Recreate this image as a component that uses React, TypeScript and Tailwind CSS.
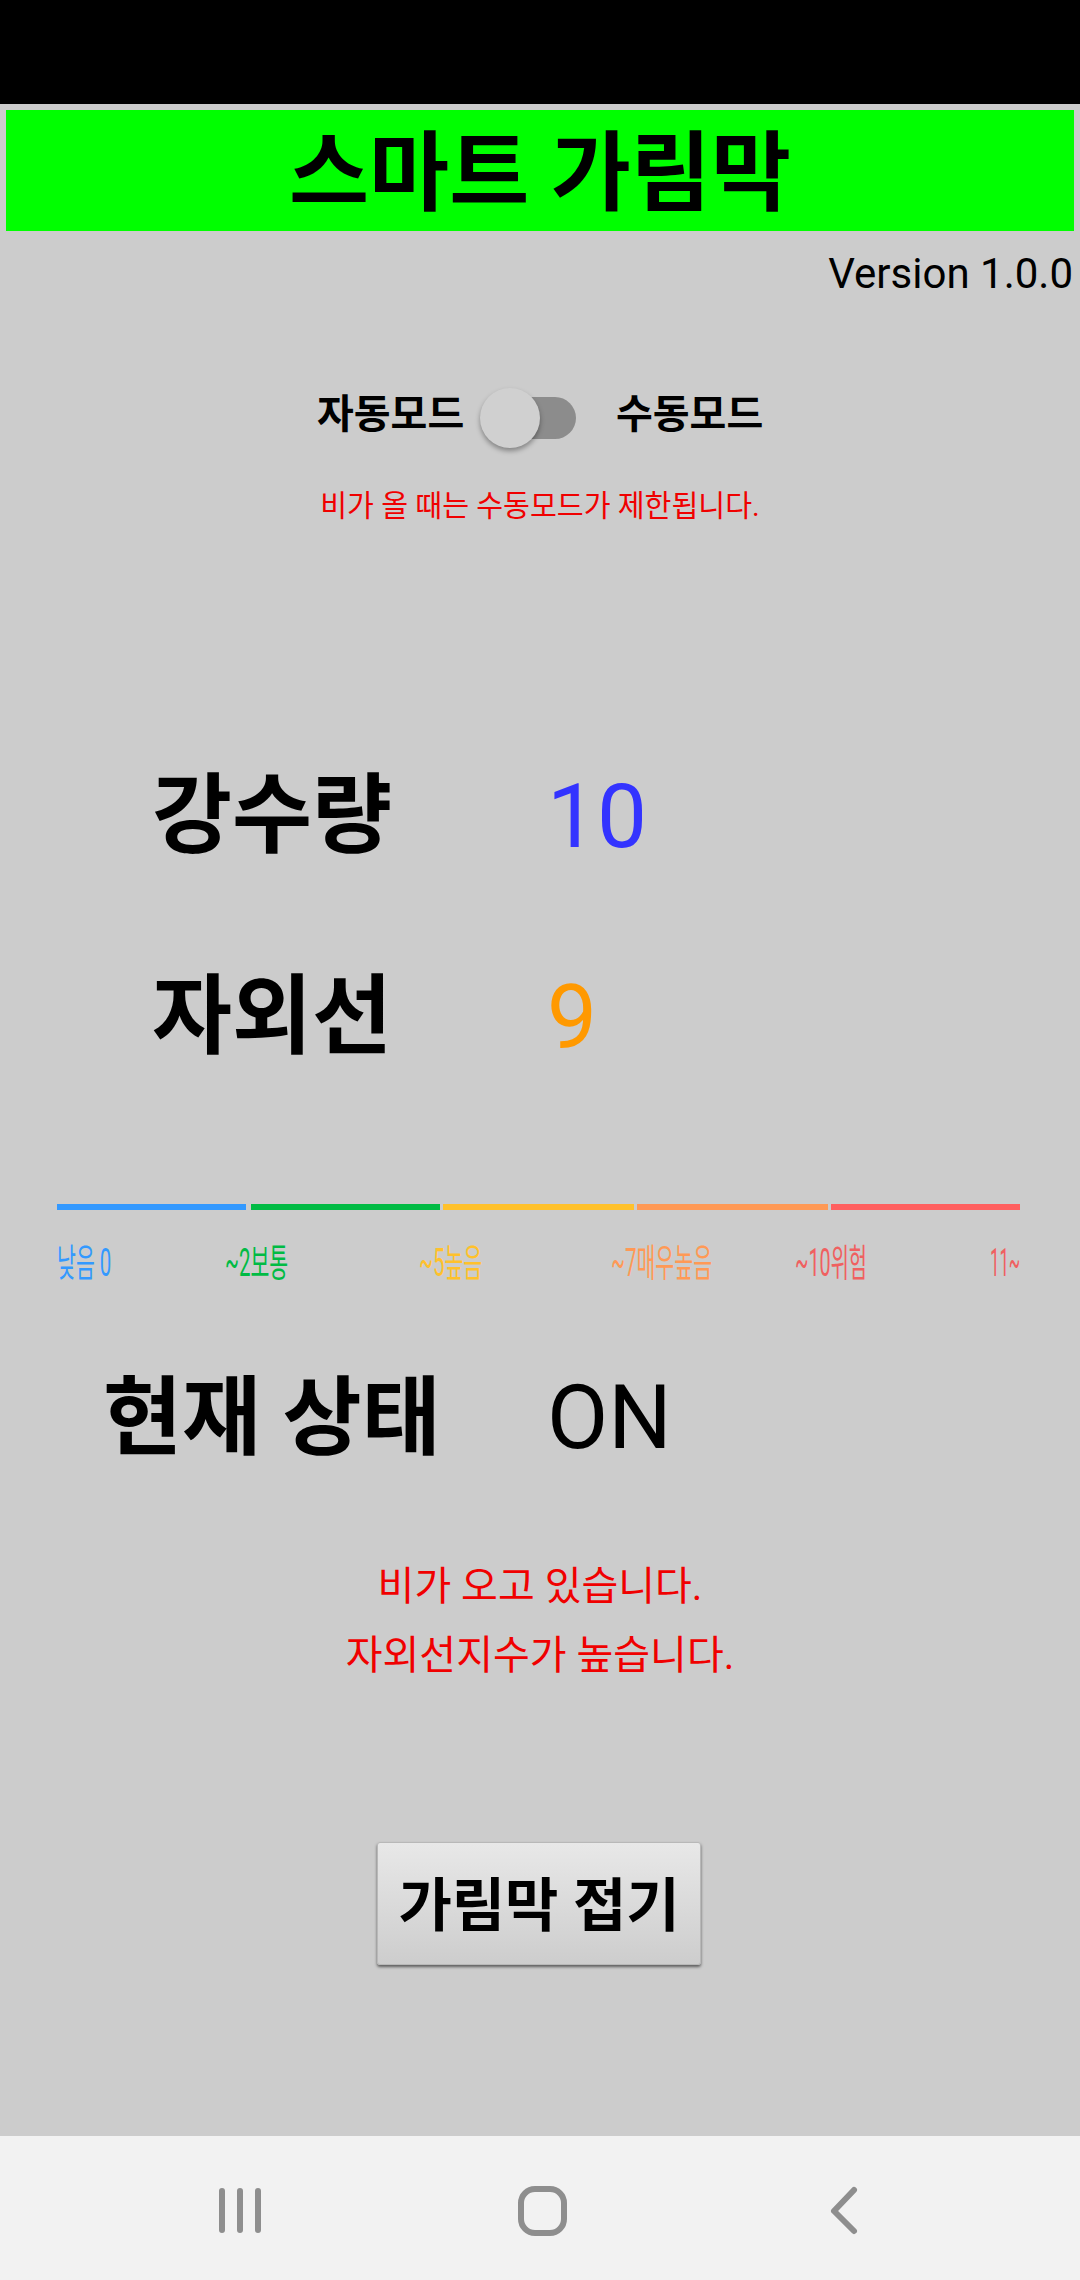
const SCALE = [
  { label: "낮음 0", width: "w-[54px]", gap: "ml-0", color: "text-[#3399ff]", squeeze: "scale-x-[0.54]" },
  { label: "~2보통", width: "w-[64px]", gap: "ml-[114px]", color: "text-[#00bb44]", squeeze: "scale-x-[0.54]" },
  { label: "~5높음", width: "w-[64px]", gap: "ml-[130px]", color: "text-[#ffc12b]", squeeze: "scale-x-[0.54]" },
  { label: "~7매우높음", width: "w-[102px]", gap: "ml-[128px]", color: "text-[#ff9955]", squeeze: "scale-x-[0.54]" },
  { label: "~10위험", width: "w-[72px]", gap: "ml-[82px]", color: "text-[#f06060]", squeeze: "scale-x-[0.52]" },
  { label: "11~", width: "w-[30px]", gap: "ml-[123px]", color: "text-[#f06060]", squeeze: "scale-x-[0.44]" },
];

const BARS = [
  "w-[189px] bg-[#3399ff]",
  "w-[189px] ml-[5px] bg-[#00bb44]",
  "w-[191px] ml-[3px] bg-[#ffc12b]",
  "w-[191px] ml-[3px] bg-[#ff9955]",
  "w-[189px] ml-[3px] bg-[#ff5f5f]",
];

function Reading({
  label,
  value,
  color,
  className,
}: {
  label: string;
  value: string;
  color: string;
  className: string;
}) {
  return (
    <div className={`flex items-center h-[100px] ${className}`}>
      <span className="w-[395px] text-[87px] leading-none font-bold text-black">{label}</span>
      <span className={`text-[89px] leading-none ${color}`}>{value}</span>
    </div>
  );
}

export default function App() {
  return (
    <div
      className="w-[1080px] h-[2280px] flex flex-col bg-[#cccccc] overflow-hidden"
      style={{ fontFamily: 'Roboto, "Noto Sans CJK KR", sans-serif' }}
    >
      {/* Status bar */}
      <div className="h-[104px] shrink-0 bg-black" />

      <div className="flex-1 flex flex-col">
        {/* Title */}
        <div className="mx-[6px] mt-[6px] h-[121px] pt-[8px] flex items-center justify-center bg-[#00ff00]">
          <h1 className="text-[87px] leading-none font-bold text-black">스마트 가림막</h1>
        </div>

        <p className="mt-[19px] pr-[7px] text-right text-[42px] leading-[48px] text-black">Version 1.0.0</p>

        {/* Mode toggle */}
        <div className="mt-[90px] ml-[317px] flex items-center h-[60px]">
          <span className="mb-[6px] w-[163px] text-[40px] leading-none font-semibold text-black">자동모드</span>
          <div className="relative w-[96px] h-[42px]">
            <div className="ml-[20px] w-[76px] h-[42px] rounded-full bg-[#8c8c8c]" />
            <div className="absolute -top-[9px] left-0 w-[60px] h-[60px] rounded-full bg-[#d0d0d0] shadow-[0_3px_5px_rgba(0,0,0,0.35)]" />
          </div>
          <span className="mb-[6px] ml-[40px] text-[40px] leading-none font-semibold text-black">수동모드</span>
        </div>

        <p className="mt-[38px] text-center text-[29.2px] leading-[40px] text-[#f00000]">
          비가 올 때는 수동모드가 제한됩니다.
        </p>

        {/* Readings */}
        <Reading label="강수량" value="10" color="text-[#3333ff]" className="mt-[240px] pl-[152px]" />
        <Reading label="자외선" value="9" color="text-[#ff9900]" className="mt-[101px] pl-[152px]" />

        {/* Scale */}
        <div className="mt-[137px] ml-[57px] flex">
          {BARS.map((bar) => (
            <div key={bar} className={`h-[6px] ${bar}`} />
          ))}
        </div>
        <div className="mt-[33px] ml-[57px] flex h-[40px] items-center">
          {SCALE.map((item) => (
            <div key={item.label} className={`shrink-0 ${item.width} ${item.gap}`}>
              <span
                className={`inline-block origin-left whitespace-nowrap text-[38px] leading-[40px] ${item.squeeze} ${item.color}`}
              >
                {item.label}
              </span>
            </div>
          ))}
        </div>

        {/* Current state */}
        <div className="mt-[86px] pl-[103px] flex items-center h-[100px]">
          <span className="w-[444px] text-[86px] leading-none font-bold text-black">현재 상태</span>
          <span className="mb-[4px] text-[89px] leading-none text-black">ON</span>
        </div>

        <div className="mt-[83px] text-center text-[40px] leading-[69px] text-[#f00000]">
          <p>비가 오고 있습니다.</p>
          <p>자외선지수가 높습니다.</p>
        </div>

        {/* Fold button */}
        <button className="mt-[152px] ml-[377px] w-[324px] h-[123px] pt-[5px] rounded-[3px] border border-[#b8b8b8] bg-gradient-to-b from-[#e8e8e8] to-[#cdcdcd] shadow-[0_2px_3px_rgba(0,0,0,0.55)] text-[58px] leading-none font-semibold text-black">
          가림막 접기
        </button>
      </div>

      {/* Navigation bar */}
      <div className="h-[144px] shrink-0 relative bg-[#f2f2f2]">
        <svg width="1080" height="144" viewBox="0 0 1080 144" fill="none" stroke="#8e8e8e" strokeLinecap="round" strokeLinejoin="round">
          <path d="M222 55v39M240 55v39M258 55v39" strokeWidth="6" />
          <rect x="521" y="53" width="43" height="44" rx="14" strokeWidth="6" />
          <path d="M854 54 834 75l20 20" strokeWidth="6" />
        </svg>
      </div>
    </div>
  );
}
